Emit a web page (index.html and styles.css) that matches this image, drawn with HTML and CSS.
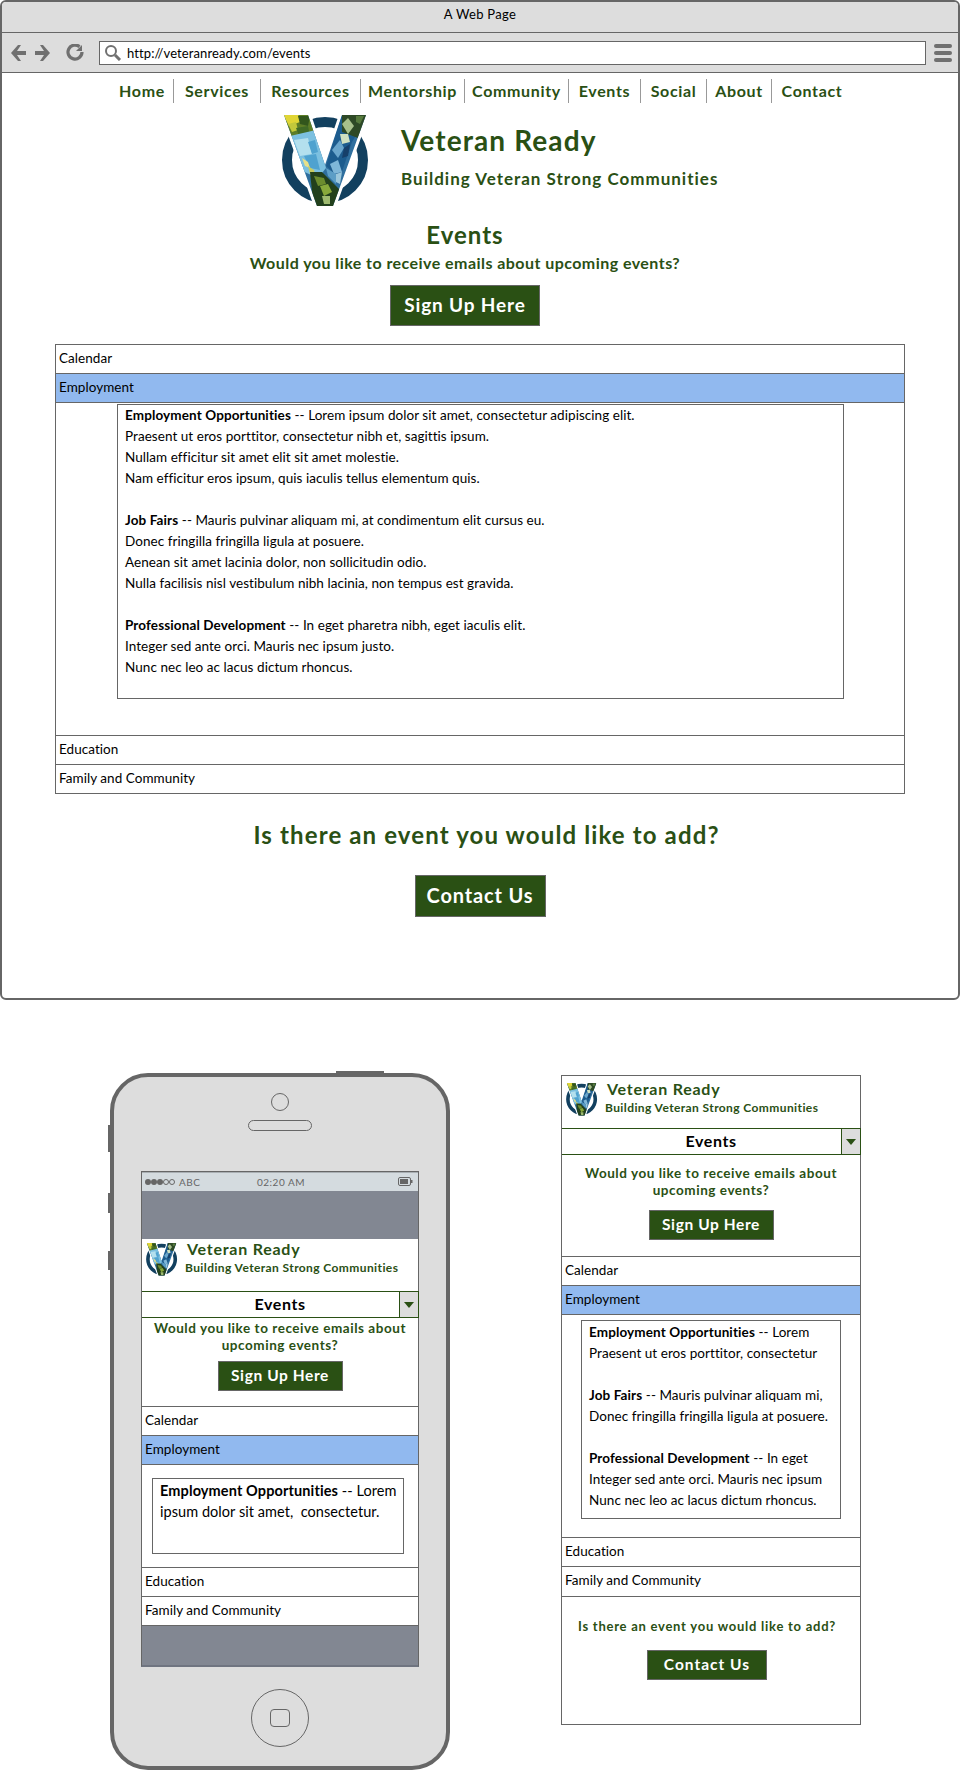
FILE: index.html
```html
<!DOCTYPE html>
<html lang="en">

<head>
  <meta charset="utf-8">
  <title>A Web Page</title>
  <link rel="stylesheet" href="styles.css">
</head>

<body>

  <svg class="defs" width="0" height="0">
    <defs>
      <clipPath id="v-clip">
        <polygon points="4,3 28,3 45,53 62,3 86,3 53,94 37,94" />
      </clipPath>
      <filter id="soft" x="0" y="0" width="100%" height="100%">
        <feGaussianBlur stdDeviation="0.600" />
      </filter>
      <symbol id="logo" viewBox="0 0 95 100">
        <circle cx="45" cy="48" r="38" fill="none" stroke="#12405f" stroke-width="10" />
        <polygon points="4,3 28,3 45,53 62,3 86,3 53,94 37,94" fill="#fff" stroke="#fff" stroke-width="6" />
        <g clip-path="url(#v-clip)">
          <rect width="95" height="100" fill="#2f6f9e" />
          <g filter="url(#soft)">
            <polygon points="0,0 30,0 34,22 12,28" fill="#5d7d28" />
            <polygon points="3,2 18,2 20,10 9,14" fill="#e0d535" />
            <polygon points="8,12 16,10 18,18 12,20" fill="#c2c83a" />
            <polygon points="18,4 30,4 28,14 20,12" fill="#33561f" />
            <polygon points="16,16 28,14 30,24 20,26" fill="#3f6a28" />
            <polygon points="10,24 36,18 46,56 38,66 20,58" fill="#7cc0e0" />
            <polygon points="14,28 28,26 32,42 20,44" fill="#b4e0ee" />
            <polygon points="28,30 35,28 38,40 32,42" fill="#4fa2cf" />
            <polygon points="24,44 36,42 40,58 30,56" fill="#4fa2cf" />
            <polygon points="22,46 28,50 30,56 25,54" fill="#e6e08a" />
            <polygon points="28,54 34,58 36,66 30,62" fill="#c8cc62" />
            <polygon points="46,54 62,2 90,2 72,30 60,66" fill="#1f5c8e" />
            <polygon points="62,2 88,2 78,26 62,20" fill="#2e4a26" />
            <polygon points="62,12 68,6 74,14 68,22" fill="#a8c08c" />
            <polygon points="76,4 84,4 80,12 76,10" fill="#577a3e" />
            <polygon points="60,22 68,22 70,30 62,32" fill="#cfe0c0" />
            <polygon points="52,38 60,28 64,36 58,46" fill="#6aa6cc" />
            <polygon points="64,36 70,32 68,44 62,46" fill="#123f6b" />
            <polygon points="50,52 58,48 62,60 54,62" fill="#7fb7d8" />
            <polygon points="56,62 62,60 60,72 56,70" fill="#9cc8dc" />
            <polygon points="30,60 42,60 60,78 54,98 34,98" fill="#24411a" />
            <polygon points="34,64 44,66 46,72 38,74" fill="#6c8c2e" />
            <polygon points="40,74 48,72 52,80 44,84" fill="#88a93a" />
            <polygon points="42,84 50,84 50,92 44,92" fill="#9fbb70" />
            <polygon points="46,56 56,62 56,72 48,64" fill="#5b9ec6" />
          </g>
        </g>
      </symbol>
    </defs>
  </svg>

  <!-- ***************** desktop ***************** -->

  <section class="browser">
    <div class="browser-title">A Web Page</div>
    <div class="browser-bar">
      <svg class="bar-icons" width="76" height="18" viewBox="0 0 76 18">
        <path d="M9 1 2 9l7 8h3l-4-6h9V7H8l4-6z" fill="#707070" />
        <path d="M34 1l7 8-7 8h-3l4-6h-9V7h9l-4-6z" fill="#707070" />
        <path d="M73 8a7 7 0 1 1-2.500-5.300" fill="none" stroke="#707070" stroke-width="3.200" />
        <path d="M73 1v6h-6z" fill="#707070" />
      </svg>
      <div class="url-field">
        <svg class="url-icon" width="18" height="17" viewBox="0 0 18 17">
          <circle cx="7" cy="7" r="5" fill="none" stroke="#707070" stroke-width="2" />
          <path d="m11 11 5 5" stroke="#707070" stroke-width="3" />
        </svg>
        http://veteranready.com/events
      </div>
      <div class="burger"><span></span><span></span><span></span></div>
    </div>

    <nav class="nav">
      <a>Home</a><a>Services</a><a>Resources</a><a>Mentorship</a><a>Community</a><a>Events</a><a>Social</a><a>About</a><a>Contact</a>
    </nav>

    <div class="site-head">
      <svg class="site-logo"><use href="#logo" /></svg>
      <div>
        <div class="site-name">Veteran Ready</div>
        <div class="site-tag">Building Veteran Strong Communities</div>
      </div>
    </div>

    <div class="intro">
      <h1>Events</h1>
      <p>Would you like to receive emails about upcoming events?</p>
      <a class="btn btn-signup">Sign Up Here</a>
    </div>

    <div class="accordion accordion-wide">
      <div class="acc-row">Calendar</div>
      <div class="acc-row acc-open">Employment</div>
      <div class="acc-body">
        <div class="acc-box">
          <b>Employment Opportunities</b> -- Lorem ipsum dolor sit amet, consectetur adipiscing elit.<br>
          Praesent ut eros porttitor, consectetur nibh et, sagittis ipsum.<br>
          Nullam efficitur sit amet elit sit amet molestie.<br>
          Nam efficitur eros ipsum, quis iaculis tellus elementum quis.<br>
          <br>
          <b>Job Fairs</b> -- Mauris pulvinar aliquam mi, at condimentum elit cursus eu.<br>
          Donec fringilla fringilla ligula at posuere.<br>
          Aenean sit amet lacinia dolor, non sollicitudin odio.<br>
          Nulla facilisis nisl vestibulum nibh lacinia, non tempus est gravida.<br>
          <br>
          <b>Professional Development</b> -- In eget pharetra nibh, eget iaculis elit.<br>
          Integer sed ante orci. Mauris nec ipsum justo.<br>
          Nunc nec leo ac lacus dictum rhoncus.
        </div>
      </div>
      <div class="acc-row">Education</div>
      <div class="acc-row">Family and Community</div>
    </div>

    <div class="add-event">
      <h2>Is there an event you would like to add?</h2>
      <a class="btn btn-contact">Contact Us</a>
    </div>
  </section>

  <section class="devices">

    <!-- ***************** phone ***************** -->

    <div class="phone">
      <span class="phone-key key-top"></span>
      <span class="phone-key key-a"></span>
      <span class="phone-key key-b"></span>
      <span class="phone-key key-c"></span>
      <span class="camera"></span>
      <span class="speaker"></span>

      <div class="screen">
        <div class="status">
          <span class="signal"><i></i><i></i><i></i><i class="off"></i><i class="off"></i></span>
          <span class="carrier">ABC</span>
          <span class="clock">02:20 AM</span>
          <svg class="battery" width="15" height="9" viewBox="0 0 15 9">
            <rect x="0.500" y="0.500" width="12" height="8" rx="1.500" fill="none" stroke="#666" />
            <rect x="2" y="2" width="8" height="5" fill="#666" />
            <rect x="13" y="3" width="1.500" height="3" fill="#666" />
          </svg>
        </div>
        <div class="screen-gap"></div>
        <div class="screen-page">
          <div class="mini-head mini-head-phone">
            <svg class="mini-logo"><use href="#logo" /></svg>
            <div>
              <div class="mini-name">Veteran Ready</div>
              <div class="mini-tag">Building Veteran Strong Communities</div>
            </div>
          </div>
          <div class="select"><span>Events</span><span class="select-arrow"></span></div>
          <div class="mini-intro mini-intro-phone">
            <p>Would you like to receive emails about<br>upcoming events?</p>
            <a class="btn btn-mini">Sign Up Here</a>
          </div>
          <div class="accordion">
            <div class="acc-row">Calendar</div>
            <div class="acc-row acc-open">Employment</div>
            <div class="acc-body acc-body-phone">
              <div class="acc-box acc-box-phone">
                <b>Employment Opportunities</b> -- Lorem<br>
                ipsum dolor sit amet,&nbsp; consectetur.
              </div>
            </div>
            <div class="acc-row">Education</div>
            <div class="acc-row">Family and Community</div>
          </div>
        </div>
        <div class="screen-gap screen-gap-end"></div>
      </div>

      <span class="home-btn"><i></i></span>
    </div>

    <!-- ***************** tablet column ***************** -->

    <div class="narrow">
      <div class="mini-head mini-head-narrow">
        <svg class="mini-logo"><use href="#logo" /></svg>
        <div>
          <div class="mini-name">Veteran Ready</div>
          <div class="mini-tag">Building Veteran Strong Communities</div>
        </div>
      </div>
      <div class="select"><span>Events</span><span class="select-arrow"></span></div>
      <div class="mini-intro mini-intro-narrow">
        <p>Would you like to receive emails about<br>upcoming events?</p>
        <a class="btn btn-mini">Sign Up Here</a>
      </div>
      <div class="accordion">
        <div class="acc-row">Calendar</div>
        <div class="acc-row acc-open">Employment</div>
        <div class="acc-body acc-body-narrow">
          <div class="acc-box acc-box-narrow">
            <b>Employment Opportunities</b> -- Lorem<br>
            Praesent ut eros porttitor, consectetur<br>
            <br>
            <b>Job Fairs</b> -- Mauris pulvinar aliquam mi,<br>
            Donec fringilla fringilla ligula at posuere.<br>
            <br>
            <b>Professional Development</b> -- In eget<br>
            Integer sed ante orci. Mauris nec ipsum<br>
            Nunc nec leo ac lacus dictum rhoncus.
          </div>
        </div>
        <div class="acc-row">Education</div>
        <div class="acc-row acc-row-last">Family and Community</div>
      </div>
      <div class="narrow-add">
        <p>Is there an event you would like to add?</p>
        <a class="btn btn-mini btn-mini-contact">Contact Us</a>
      </div>
    </div>

  </section>

</body>

</html>
```

FILE: styles.css
```css
/* ******************** global ******************* */

* {
  box-sizing: border-box;
}

html,
body {
  margin: 0;
  padding: 0;
  background-color: white;
}

body {
  width: 960px;
  height: 1771px;
  overflow: hidden;
  font-family: "Lato", "Liberation Sans", sans-serif;
  color: black;
}

h1,
h2,
p {
  margin: 0;
}

.defs {
  position: absolute;
}

/* ******************** browser ******************* */

.browser {
  height: 1000px;
  border: 2px solid #666;
  border-radius: 6px;
}

.browser-title {
  height: 31px;
  padding-top: 4px;
  background-color: #dddddd;
  border-bottom: 1px solid #666;
  border-radius: 4px 4px 0 0;
  font-size: 13px;
  letter-spacing: 0.3px;
  text-align: center;
}

.browser-bar {
  display: flex;
  align-items: center;
  height: 40px;
  padding-left: 7px;
  background-color: #dddddd;
  border-bottom: 1px solid #666;
}

.bar-icons {
  flex: none;
  margin-right: 14px;
}

.url-field {
  display: flex;
  align-items: center;
  gap: 5px;
  width: 827px;
  height: 24px;
  padding-left: 4px;
  background-color: white;
  border: 1px solid #666;
  font-size: 13px;
  letter-spacing: 0.1px;
}

.burger {
  display: flex;
  flex-direction: column;
  gap: 3px;
  margin-left: 8px;
}

.burger span {
  display: block;
  width: 18px;
  height: 4px;
  border-radius: 2px;
  background-color: #707070;
}

/* ******************** site head ******************* */

.nav {
  display: grid;
  grid-template-columns: 63px 87px 100px 104px 104px 72px 66px 65px 80px;
  height: 24px;
  margin-top: 6px;
  padding-left: 109px;
  font-size: 16px;
  font-weight: 700;
  letter-spacing: 0.65px;
  line-height: 24px;
  text-align: center;
  color: #2a5014;
}

.nav a {
  border-right: 1px solid #999;
}

.nav a:last-child {
  border-right: none;
}

.site-head {
  display: flex;
  margin: 9px 0 0 278px;
  height: 100px;
}

.site-logo {
  width: 95px;
  height: 100px;
  margin-right: 26px;
}

.site-name {
  margin-top: 11px;
  font-size: 28px;
  font-weight: 700;
  letter-spacing: 1.1px;
  line-height: 34px;
  color: #2a5014;
}

.site-tag {
  margin-top: 11px;
  font-size: 17px;
  font-weight: 700;
  letter-spacing: 1px;
  line-height: 22px;
  color: #2a5014;
}

.intro {
  display: flex;
  flex-direction: column;
  align-items: center;
  width: 926px;
  margin-top: 8px;
  color: #2a5014;
}

.intro h1 {
  font-size: 24px;
  letter-spacing: 1px;
  line-height: 30px;
}

.intro p {
  margin-top: 3px;
  font-size: 16px;
  font-weight: 700;
  letter-spacing: 0.45px;
  line-height: 20px;
}

.btn {
  display: block;
  background-color: #2a5014;
  border: 1px solid #666;
  color: white;
  font-weight: 700;
  text-align: center;
}

.btn-signup {
  width: 150px;
  height: 41px;
  margin-top: 12px;
  font-size: 19px;
  letter-spacing: 0.85px;
  line-height: 38px;
}

/* ******************** accordion ******************* */

.accordion {
  border-top: 1px solid #666;
  border-bottom: 1px solid #666;
  font-size: 13.500px;
  letter-spacing: 0.05px;
  white-space: nowrap;
}

.accordion-wide {
  width: 850px;
  margin: 18px 0 0 53px;
  border-left: 1px solid #666;
  border-right: 1px solid #666;
}

.acc-row {
  height: 29px;
  padding-left: 3px;
  line-height: 27px;
  border-bottom: 1px solid #666;
}

.accordion .acc-row:last-child {
  border-bottom: none;
  height: 28px;
}

.accordion .acc-row-last:last-child {
  height: 29px;
}

.acc-open {
  background-color: #91b9ef;
}

.acc-body {
  height: 333px;
  padding: 1px 0 0 61px;
  border-bottom: 1px solid #666;
}

.acc-box {
  width: 727px;
  height: 295px;
  padding: 0 7px;
  border: 1px solid #666;
  line-height: 21px;
}

.acc-box b {
  letter-spacing: 0.12px;
}

/* ******************** add event ******************* */

.add-event {
  display: flex;
  flex-direction: column;
  align-items: center;
  width: 956px;
  margin-top: 25px;
  color: #2a5014;
}

.add-event h2 {
  padding-left: 13px;
  font-size: 24px;
  letter-spacing: 1.13px;
  line-height: 32px;
}

.btn-contact {
  width: 131px;
  height: 42px;
  margin-top: 24px;
  font-size: 20px;
  letter-spacing: 0.85px;
  line-height: 39px;
}

/* ******************** devices ******************* */

.devices {
  display: flex;
  align-items: flex-start;
  padding: 73px 0 0 110px;
}

.phone {
  position: relative;
  flex: none;
  width: 340px;
  height: 697px;
  padding: 94px 0 0 27px;
  background-color: #dddddd;
  border: 4px solid #666;
  border-radius: 38px;
}

.phone-key {
  position: absolute;
  background-color: #666;
}

.key-top {
  top: -6px;
  left: 222px;
  width: 48px;
  height: 3px;
}

.key-a,
.key-b,
.key-c {
  left: -6px;
  width: 3px;
}

.key-a {
  top: 48px;
  height: 27px;
}

.key-b {
  top: 116px;
  height: 20px;
}

.key-c {
  top: 174px;
  height: 19px;
}

.camera {
  position: absolute;
  top: 16px;
  left: 157px;
  width: 18px;
  height: 18px;
  border: 1px solid #666;
  border-radius: 50%;
}

.speaker {
  position: absolute;
  top: 43px;
  left: 134px;
  width: 64px;
  height: 11px;
  border: 1px solid #666;
  border-radius: 6px;
}

.screen {
  width: 278px;
  border: 1px solid #666;
  border-bottom: 2px solid #6f7480;
  background-color: white;
}

.status {
  position: relative;
  display: flex;
  align-items: center;
  height: 19px;
  padding-left: 3px;
  background-color: #d4dbdf;
  border-top: 1px solid #a9afb3;
  font-size: 10px;
  letter-spacing: 0.5px;
  color: #666;
}

.signal {
  display: flex;
  margin-right: 4px;
}

.signal i {
  display: block;
  width: 6px;
  height: 6px;
  border-radius: 50%;
  background-color: #666;
}

.signal i.off {
  background-color: transparent;
  border: 1px solid #666;
}

.clock {
  position: absolute;
  left: 115px;
}

.battery {
  position: absolute;
  right: 5px;
  top: 4px;
}

.screen-gap {
  height: 48px;
  background-color: #828792;
}

.screen-gap-end {
  height: 39px;
}

/* ******************** small pages ******************* */

.mini-head {
  display: flex;
  height: 52px;
}

.mini-head-phone {
  padding: 3px 0 0 3px;
}

.mini-head-narrow {
  padding: 6px 0 0 3px;
}

.mini-logo {
  width: 35px;
  height: 36px;
  margin-right: 5px;
}

.mini-name {
  margin: -3px 0 0 2px;
  font-size: 16px;
  font-weight: 700;
  letter-spacing: 0.75px;
  line-height: 20px;
  color: #2a5014;
}

.mini-tag {
  margin-top: 1px;
  font-size: 12px;
  font-weight: 700;
  letter-spacing: 0.4px;
  line-height: 16px;
  color: #2a5014;
}

.select {
  position: relative;
  height: 27px;
  margin-right: -1px;
  border: 1px solid #2a5014;
  border-width: 1px 1px 1px 0;
  font-size: 16px;
  font-weight: 700;
  letter-spacing: 0.6px;
  line-height: 23px;
  text-align: center;
}

.select-arrow {
  position: absolute;
  top: 0;
  right: 0;
  width: 19px;
  height: 25px;
  background-color: #dddddd;
  border-left: 1px solid #2a5014;
}

.select-arrow::after {
  content: "";
  position: absolute;
  top: 10px;
  left: 4px;
  border-style: solid;
  border-width: 6px 5px 0;
  border-color: #2a5014 transparent transparent;
}

.mini-intro {
  display: flex;
  flex-direction: column;
  align-items: center;
  font-size: 13.500px;
  font-weight: 700;
  letter-spacing: 0.55px;
  line-height: 17px;
  text-align: center;
  color: #2a5014;
}

.mini-intro-phone {
  height: 88px;
  padding-top: 2px;
}

.mini-intro-narrow {
  height: 101px;
  padding-top: 10px;
}

.btn-mini {
  width: 125px;
  height: 30px;
  margin-top: 7px;
  font-size: 15.500px;
  letter-spacing: 0.6px;
  line-height: 27px;
}

.mini-intro-narrow .btn-mini {
  margin-top: 11px;
}

.acc-body-phone {
  height: 103px;
  padding: 13px 0 0 10px;
}

.acc-box-phone {
  width: 252px;
  height: 76px;
  padding-top: 1px;
  font-size: 14.500px;
}

.acc-body-narrow {
  height: 223px;
  padding: 5px 0 0 19px;
}

.acc-box-narrow {
  width: 260px;
  height: 199px;
  padding-top: 1px;
}

.narrow {
  flex: none;
  width: 300px;
  height: 650px;
  margin: 2px 0 0 111px;
  border: 1px solid #666;
}

.narrow-add {
  display: flex;
  flex-direction: column;
  align-items: center;
  padding: 19px 8px 0 0;
  font-size: 13px;
  font-weight: 700;
  letter-spacing: 0.75px;
  line-height: 20px;
  color: #2a5014;
}

.btn-mini-contact {
  width: 120px;
  margin-top: 14px;
  letter-spacing: 1px;
}

.home-btn {
  position: absolute;
  top: 612px;
  left: 137px;
  display: flex;
  align-items: center;
  justify-content: center;
  width: 58px;
  height: 58px;
  border: 1px solid #666;
  border-radius: 50%;
}

.home-btn i {
  display: block;
  width: 20px;
  height: 18px;
  border: 1px solid #666;
  border-radius: 4px;
}
```
